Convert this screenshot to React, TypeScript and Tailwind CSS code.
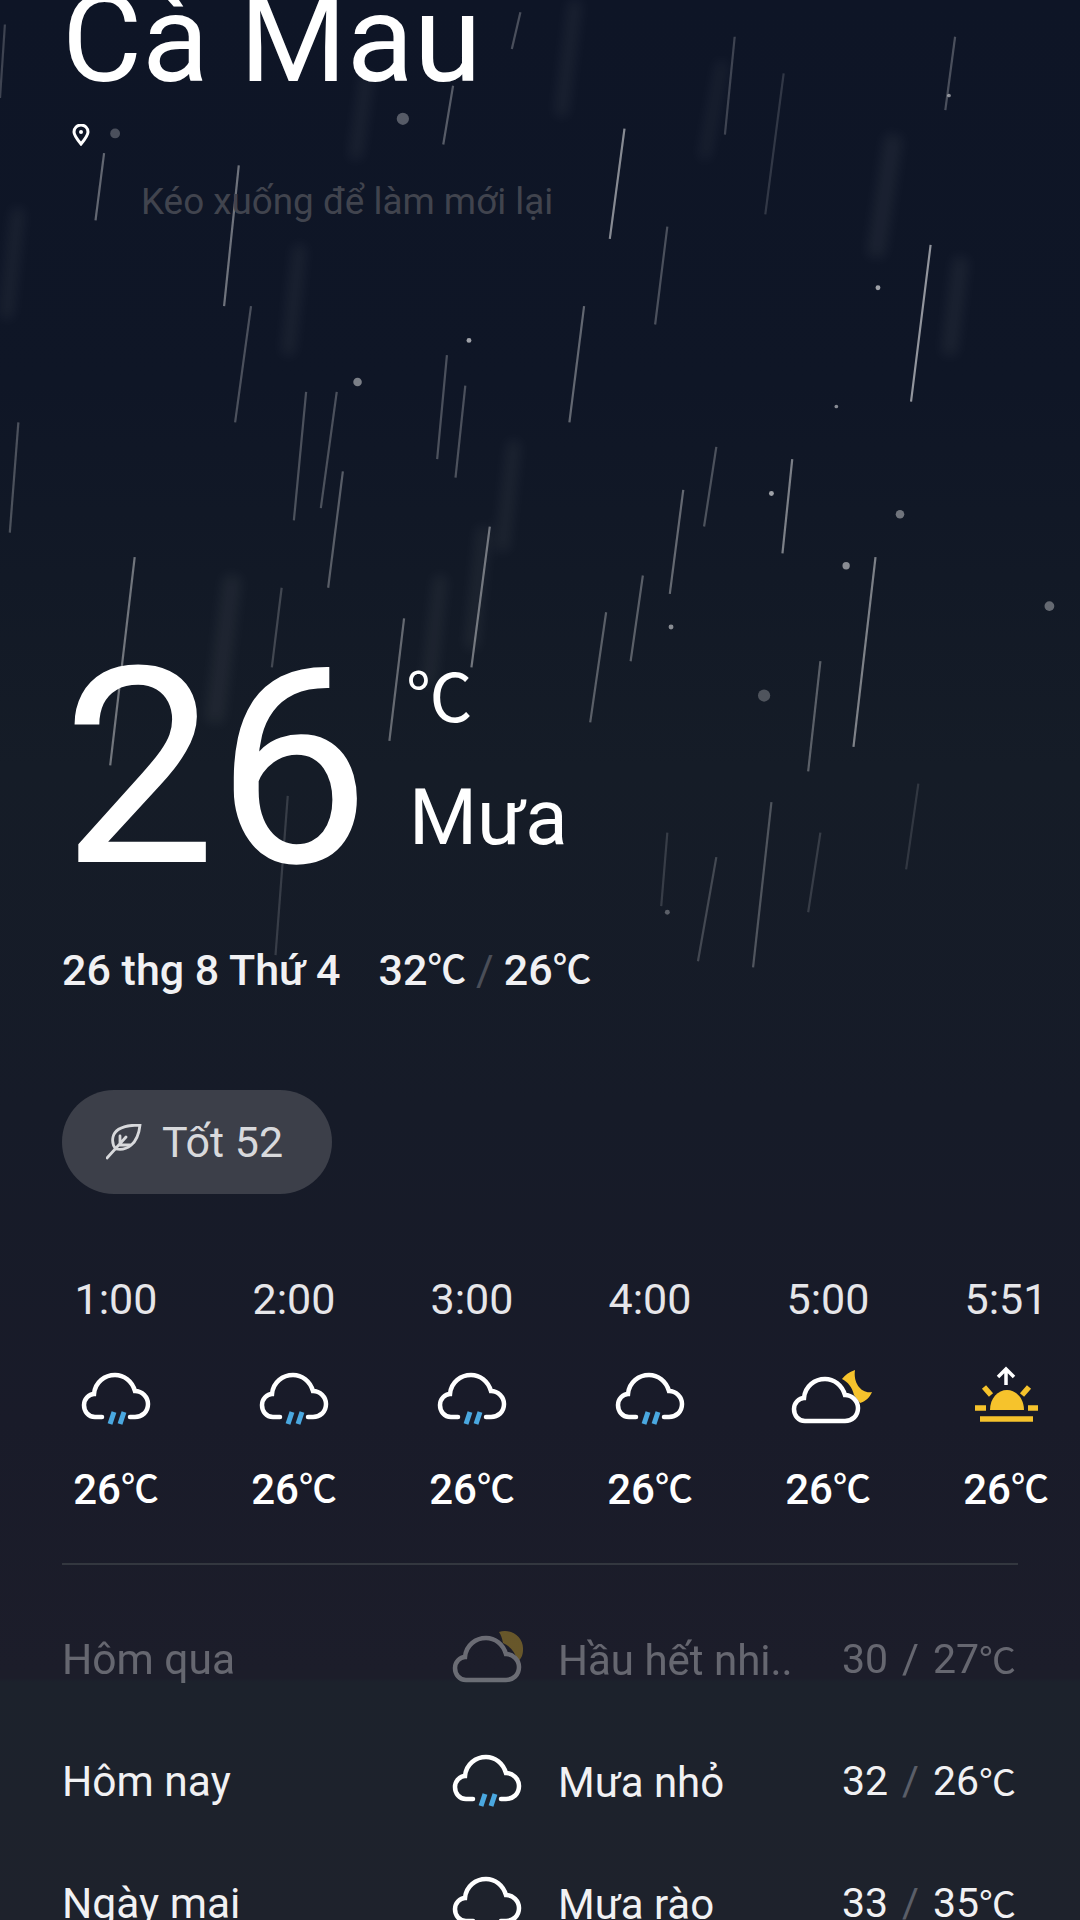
// App.tsx - rainy night weather screen

const streaks = [
  [510, 105, 498, 195, 0.5], [760, 200, 744, 328, 0.55], [715, 455, 697, 610, 0.45], [647, 375, 639, 452, 0.45],
  [585, 365, 575, 430, 0.25], [558, 400, 547, 485, 0.35], [477, 250, 465, 345, 0.35], [400, 430, 385, 545, 0.4],
  [110, 455, 90, 625, 0.4], [195, 135, 183, 250, 0.4], [275, 320, 262, 415, 0.25], [330, 505, 318, 605, 0.35],
  [85, 125, 78, 180, 0.35], [370, 70, 362, 118, 0.3], [425, 10, 418, 40, 0.25], [670, 540, 660, 630, 0.3],
  [630, 655, 615, 790, 0.25], [585, 700, 570, 785, 0.2], [670, 680, 660, 745, 0.15], [750, 640, 740, 710, 0.12],
  [230, 480, 222, 545, 0.2], [495, 500, 482, 590, 0.3], [525, 470, 515, 540, 0.3], [545, 680, 540, 740, 0.15],
  [15, 345, 8, 435, 0.25], [250, 320, 240, 425, 0.25], [205, 250, 192, 345, 0.25], [280, 385, 268, 480, 0.3],
  [365, 290, 357, 375, 0.25], [380, 315, 372, 390, 0.25], [235, 650, 225, 780, 0.15], [600, 30, 592, 110, 0.2],
  [545, 185, 535, 265, 0.25], [780, 30, 772, 90, 0.25], [4, 20, 0, 80, 0.2], [640, 60, 625, 175, 0.15],
];

const softStreaks = [
  [470, 0, 458, 95, 10], [730, 110, 715, 210, 14], [785, 210, 775, 290, 12], [300, 60, 290, 130, 10],
  [245, 200, 235, 290, 10], [15, 170, 5, 260, 10], [190, 470, 175, 590, 14], [395, 430, 385, 530, 10],
  [420, 360, 410, 450, 10], [360, 470, 350, 560, 10], [590, 50, 575, 130, 8],
];

const drops = [
  [329, 97, 5, 0.3], [292, 312, 3.5, 0.45], [383, 278, 2, 0.6], [717, 235, 2, 0.6], [630, 403, 2, 0.6],
  [735, 420, 3.5, 0.4], [691, 462, 3, 0.5], [857, 495, 4, 0.35], [548, 512, 2, 0.5], [624, 568, 5, 0.25],
  [683, 332, 1.5, 0.5], [775, 78, 1.5, 0.5], [545, 745, 2, 0.3], [94, 109, 4, 0.25],
];

const cloudD =
  "C6 45 2 39 2 33 C2 27 7 22 12 22 C13 10 23 3 33 3 C42 3 50 9 53 19 C60 19 66 25 66 32 C66 40 60 45 53 45";

function Celsius() {
  return <span className="relative -top-[0.05em] font-['Noto_Sans_CJK_SC',sans-serif] text-[0.9em] leading-[0]">℃</span>;
}

function RainIcon({ rain = true }: { rain?: boolean }) {
  return (
    <svg width="80" height="64" viewBox="0 0 80 64" fill="none">
      <g transform="translate(6 4)">
        <path d={`M20 45 H13 ${cloudD} H48`} stroke="#fff" strokeWidth="4.5" strokeLinecap="round" />
        {rain && <path d="M32 40 L28 52 M42 40 L38 52" stroke="#4aa8e0" strokeWidth="5" />}
      </g>
    </svg>
  );
}

function MoonCloudIcon() {
  return (
    <svg width="80" height="64" viewBox="0 0 80 64" fill="none" className="overflow-visible">
      <path
        d="M67 2 C61 4 57 7 54 11 C60 14 64 19 66 27 L72 35 C78 33 82 29 84 24 C74 26 65 16 67 2Z"
        fill="#f6c32c"
      />
      <g transform="translate(4 8)">
        <path d={`M53 45 H13 ${cloudD}`} stroke="#fff" strokeWidth="4.5" />
      </g>
    </svg>
  );
}

function SunCloudIcon() {
  return (
    <svg width="80" height="64" viewBox="0 0 80 64" fill="none" className="overflow-visible">
      <path d="M52 4 C64 0 77 9 76 22 C76 27 74 31 71 33 C68 24 63 18 56 15 C55 10 54 7 52 4Z" fill="#f6c32c" />
      <g transform="translate(6 7)">
        <path d={`M53 45 H13 ${cloudD}`} stroke="#fff" strokeWidth="4.5" />
      </g>
    </svg>
  );
}

function SunriseIcon() {
  return (
    <svg width="80" height="64" viewBox="0 0 80 64" fill="none" className="overflow-visible">
      <path d="M40 17 V2 M32 9 L40 1 L48 9" stroke="#fff" strokeWidth="3.5" />
      <path d="M24 42 C24 30 32 22 41 22 C50 22 58 30 58 42Z" fill="#f6c32c" />
      <path
        d="M18 19 L25 27 M63 19 L56 27 M9 40 H20 M62 40 H72 M14 51 H67"
        stroke="#f6c32c"
        strokeWidth="5.5"
      />
    </svg>
  );
}

function LeafIcon() {
  return (
    <svg width="36" height="36" viewBox="0 0 36 36" fill="none" stroke="#d8d9dc" strokeWidth="2.8" strokeLinecap="round">
      <path d="M34 1 C20 1 9 4 7 13 C6 18 7 22 10 25 C20 27 32 21 34 1Z" />
      <path d="M1 34 L20 13 M14 21 V12 M14 21 H24" />
    </svg>
  );
}

const hours = [
  { time: "1:00", icon: <RainIcon /> },
  { time: "2:00", icon: <RainIcon /> },
  { time: "3:00", icon: <RainIcon /> },
  { time: "4:00", icon: <RainIcon /> },
  { time: "5:00", icon: <MoonCloudIcon /> },
  { time: "5:51", icon: <SunriseIcon /> },
];

const days = [
  { day: "Hôm qua", icon: <SunCloudIcon />, text: "Hầu hết nhi..", hi: "30", lo: "27", dim: true },
  { day: "Hôm nay", icon: <RainIcon />, text: "Mưa nhỏ", hi: "32", lo: "26", dim: false },
  { day: "Ngày mai", icon: <RainIcon rain={false} />, text: "Mưa rào", hi: "33", lo: "35", dim: false },
];

export default function App() {
  return (
    <div className="relative h-[1920px] w-[1080px] overflow-hidden bg-[linear-gradient(180deg,#0e1526_0%,#0f1626_20%,#121926_30%,#151c27_40%,#161b28_58%,#191b29_74%,#1c1d2a_87%,#1c1d2a_87.4%,#1c222c_87.6%,#1e222c_100%)] font-['Roboto','Noto_Sans_CJK_SC',sans-serif] text-white">
      {/* Rain */}
      <svg className="absolute inset-0 h-full w-full" viewBox="0 0 882 1568" fill="none">
        <g className="blur-[5px]">
          {softStreaks.map(([x1, y1, x2, y2, w], i) => (
            <line key={i} x1={x1} y1={y1} x2={x2} y2={y2} stroke="#fff" strokeOpacity="0.06" strokeWidth={w} />
          ))}
        </g>
        <g className="blur-[0.6px]">
          {streaks.map(([x1, y1, x2, y2, o], i) => (
            <line key={i} x1={x1} y1={y1} x2={x2} y2={y2} stroke="#fff" strokeOpacity={o} strokeWidth="1.8" />
          ))}
          {drops.map(([cx, cy, r, o], i) => (
            <circle key={i} cx={cx} cy={cy} r={r} fill="#fff" fillOpacity={o} />
          ))}
        </g>
      </svg>

      <div className="relative flex flex-col px-[62px]">
        <h1 className="-mt-[21px] h-[121px] text-[123px] leading-[121px] font-normal whitespace-nowrap">Cà Mau</h1>

        <div className="mt-[24px] ml-[10px] h-[20px]">
          <svg width="18" height="22" viewBox="0 0 18 22" fill="none">
            <path d="M9 20 C4 14 2 11 2 8 A7 7 0 0 1 16 8 C16 11 14 14 9 20Z" stroke="#fff" strokeWidth="3" />
            <circle cx="9" cy="8" r="2" fill="#fff" />
          </svg>
        </div>

        <p className="mt-[38px] ml-[79px] h-[40px] text-[36.8px] leading-[40px] text-[#41444e] whitespace-nowrap">
          Kéo xuống để làm mới lại
        </p>

        {/* Current temperature */}
        <div className="mt-[409px] flex h-[276px]">
          <div className="w-[310px] text-[274px] leading-[276px]">26</div>
          <div className="ml-[37px] flex flex-col pt-[29px]">
            <span className="-ml-[3px] h-[80px] text-[74px] leading-[80px]">
              <Celsius />
            </span>
            <span className="mt-[38px] text-[78px] leading-[80px]">Mưa</span>
          </div>
        </div>

        <div className="mt-[38px] flex h-[50px] items-center text-[43px] leading-[50px] font-medium text-[#f1f1f3] whitespace-nowrap">
          <span>26 thg 8 Thứ 4</span>
          <span className="ml-[38px]">
            32
            <Celsius />
          </span>
          <span className="ml-[10px] font-normal text-[#4a4e58]">/</span>
          <span className="ml-[10px]">
            26
            <Celsius />
          </span>
        </div>

        {/* Air quality */}
        <div className="mt-[95px] flex h-[104px] w-[270px] items-center rounded-full bg-[#3c3f49] pl-[44px]">
          <LeafIcon />
          <span className="ml-[20px] text-[43px] leading-[50px] text-[#d8d9dc]">Tốt 52</span>
        </div>

        {/* Hourly */}
        <div className="mt-[80px] -ml-[35px] flex">
          {hours.map((h) => (
            <div key={h.time} className="flex w-[178px] shrink-0 flex-col items-center">
              <span className="h-[50px] text-[43px] leading-[50px] text-[#e6e6e9]">{h.time}</span>
              <div className="mt-[44px] h-[64px]">{h.icon}</div>
              <span className="mt-[33px] h-[50px] text-[42px] leading-[50px] font-medium whitespace-nowrap">
                26
                <Celsius />
              </span>
            </div>
          ))}
        </div>

        <div className="mt-[48px] h-[2px] bg-[#33373f]" />

        {/* Daily */}
        <div className="mt-[34px] flex flex-col">
          {days.map((d) => (
            <div key={d.day} className={`flex h-[122px] shrink-0 items-center text-[42.5px] ${d.dim ? "opacity-35" : ""}`}>
              <span className="w-[385px] text-[#f1f1f3]">{d.day}</span>
              <div className="h-[64px] w-[80px]">{d.icon}</div>
              <span className="ml-[31px] w-[284px] text-[42px] text-[#f1f1f3] whitespace-nowrap">{d.text}</span>
              <span className="flex items-center text-[41px] text-[#f1f1f3] whitespace-nowrap">
                {d.hi}
                <span className={`mx-[14px] font-normal ${d.dim ? "text-[#f1f1f3]" : "text-[#5a5e68]"}`}>/</span>
                {d.lo}
                <Celsius />
              </span>
            </div>
          ))}
        </div>
      </div>
    </div>
  );
}
